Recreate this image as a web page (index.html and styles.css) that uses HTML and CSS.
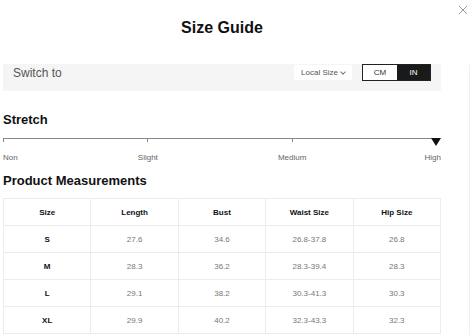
FILE: index.html
```html
<!DOCTYPE html>
<html lang="en">
<head>
  <meta charset="UTF-8">
  <title>Size Guide</title>
  <link rel="stylesheet" href="styles.css">
</head>
<body>

  <div class="modal">
    <div class="content">
      <h1 class="title">Size Guide</h1>

      <div class="switch-bar">
        <span class="switch-label">Switch to</span>
        <div class="switch-controls">
          <div class="local-size">Local Size <span class="caret"></span></div>
          <div class="unit-toggle">
            <span class="unit">CM</span>
            <span class="unit active">IN</span>
          </div>
        </div>
      </div>

      <h2 class="section-title stretch-title">Stretch</h2>
      <div class="stretch">
        <div class="stops">
          <div class="stop first"><span class="tick"></span><span class="stop-label">Non</span></div>
          <div class="stop"><span class="tick"></span><span class="stop-label">Slight</span></div>
          <div class="stop"><span class="tick"></span><span class="stop-label">Medium</span></div>
          <div class="stop last"><span class="tick"></span><span class="stop-label">High</span></div>
        </div>
        <svg class="marker" width="10" height="8" viewBox="0 0 10 8"><path d="M0 0 H10 L5 8 Z" fill="#111"/></svg>
      </div>

      <h2 class="section-title measure-title">Product Measurements</h2>
      <table class="measurements">
        <thead>
          <tr><th>Size</th><th>Length</th><th>Bust</th><th>Waist Size</th><th>Hip Size</th></tr>
        </thead>
        <tbody>
          <tr><th>S</th><td>27.6</td><td>34.6</td><td>26.8-37.8</td><td>26.8</td></tr>
          <tr><th>M</th><td>28.3</td><td>36.2</td><td>28.3-39.4</td><td>28.3</td></tr>
          <tr><th>L</th><td>29.1</td><td>38.2</td><td>30.3-41.3</td><td>30.3</td></tr>
          <tr><th>XL</th><td>29.9</td><td>40.2</td><td>32.3-43.3</td><td>32.3</td></tr>
        </tbody>
      </table>
    </div>

    <div class="side">
      <button class="close" aria-label="Close">
        <svg width="10" height="10" viewBox="0 0 10 10"><path d="M1 1 L9 9 M9 1 L1 9" stroke="#9a9a9a" stroke-width="1"/></svg>
      </button>
      <div class="rail"></div>
    </div>
  </div>

</body>
</html>
```

FILE: styles.css
```css
body {
  font-family: Arial, 'Liberation Sans', Helvetica, sans-serif;
  background: #fff;
  margin: 0;
  color: #222;
}

.modal {
  display: flex;
  width: 470px;
  height: 335px;
  overflow: hidden;
}

.content {
  width: 438px;
  padding-left: 3px;
  flex-shrink: 0;
}

.title {
  height: 56px;
  margin: 0;
  display: flex;
  align-items: center;
  justify-content: center;
  font-size: 16px;
  font-weight: bold;
  color: #111;
}

.switch-bar {
  margin-top: 8px;
  height: 27px;
  box-sizing: border-box;
  padding: 0 10px 10px;
  background: #f5f5f5;
  display: flex;
  justify-content: space-between;
  align-items: center;
}

.switch-label {
  font-size: 12px;
  color: #555;
}

.switch-controls {
  display: flex;
  align-items: center;
  gap: 10px;
}

.local-size {
  width: 58px;
  height: 15px;
  background: #fff;
  font-size: 8px;
  color: #555;
  display: flex;
  align-items: center;
  justify-content: center;
  gap: 3px;
}

.caret {
  width: 3px;
  height: 3px;
  border-right: 1px solid #777;
  border-bottom: 1px solid #777;
  transform: rotate(45deg);
  margin-top: -2px;
}

.unit-toggle {
  display: flex;
  border: 1px solid #222;
  height: 17px;
  box-sizing: border-box;
}

.unit {
  width: 34px;
  display: flex;
  align-items: center;
  justify-content: center;
  font-size: 8px;
  color: #333;
  background: #fff;
}

.unit.active {
  background: #1a1a1a;
  color: #fff;
  width: 33px;
}

.section-title {
  margin: 0;
  font-size: 13px;
  font-weight: bold;
  line-height: 16px;
  color: #111;
}

.stretch-title {
  margin-top: 21px;
}

.stretch {
  position: relative;
  margin-top: 10px;
  width: 434px;
}

.stops {
  display: flex;
  justify-content: space-between;
  border-top: 1px solid #888;
}

.stop {
  width: 1px;
  display: flex;
  flex-direction: column;
  align-items: center;
}

.stop.first {
  align-items: flex-start;
}

.stop.last {
  align-items: flex-end;
}

.tick {
  width: 1px;
  height: 3px;
  background: #888;
}

.stop-label {
  margin-top: 11px;
  font-size: 8px;
  line-height: 10px;
  color: #666;
  white-space: nowrap;
}

.stop.last .stop-label {
  margin-right: -4px;
}

.marker {
  position: absolute;
  right: -4px;
  top: 0;
}

.measure-title {
  margin-top: 10px;
}

.measurements {
  margin-top: 9px;
  width: 438px;
  border-collapse: collapse;
  table-layout: fixed;
  font-size: 8px;
}

.measurements th,
.measurements td {
  border: 1px solid #ececec;
  text-align: center;
  height: 26px;
  padding: 0;
}

.measurements th {
  color: #111;
  font-weight: bold;
}

.measurements td {
  color: #777;
}

.side {
  flex: 1;
  display: flex;
  flex-direction: column;
  align-items: flex-end;
}

.close {
  background: none;
  border: none;
  padding: 0;
  margin: 3px 2px 0 0;
  width: 10px;
  height: 10px;
  cursor: pointer;
  display: block;
}

.rail {
  margin-top: 52px;
  flex: 1;
  width: 1px;
  background: #f0f0f0;
}
```
